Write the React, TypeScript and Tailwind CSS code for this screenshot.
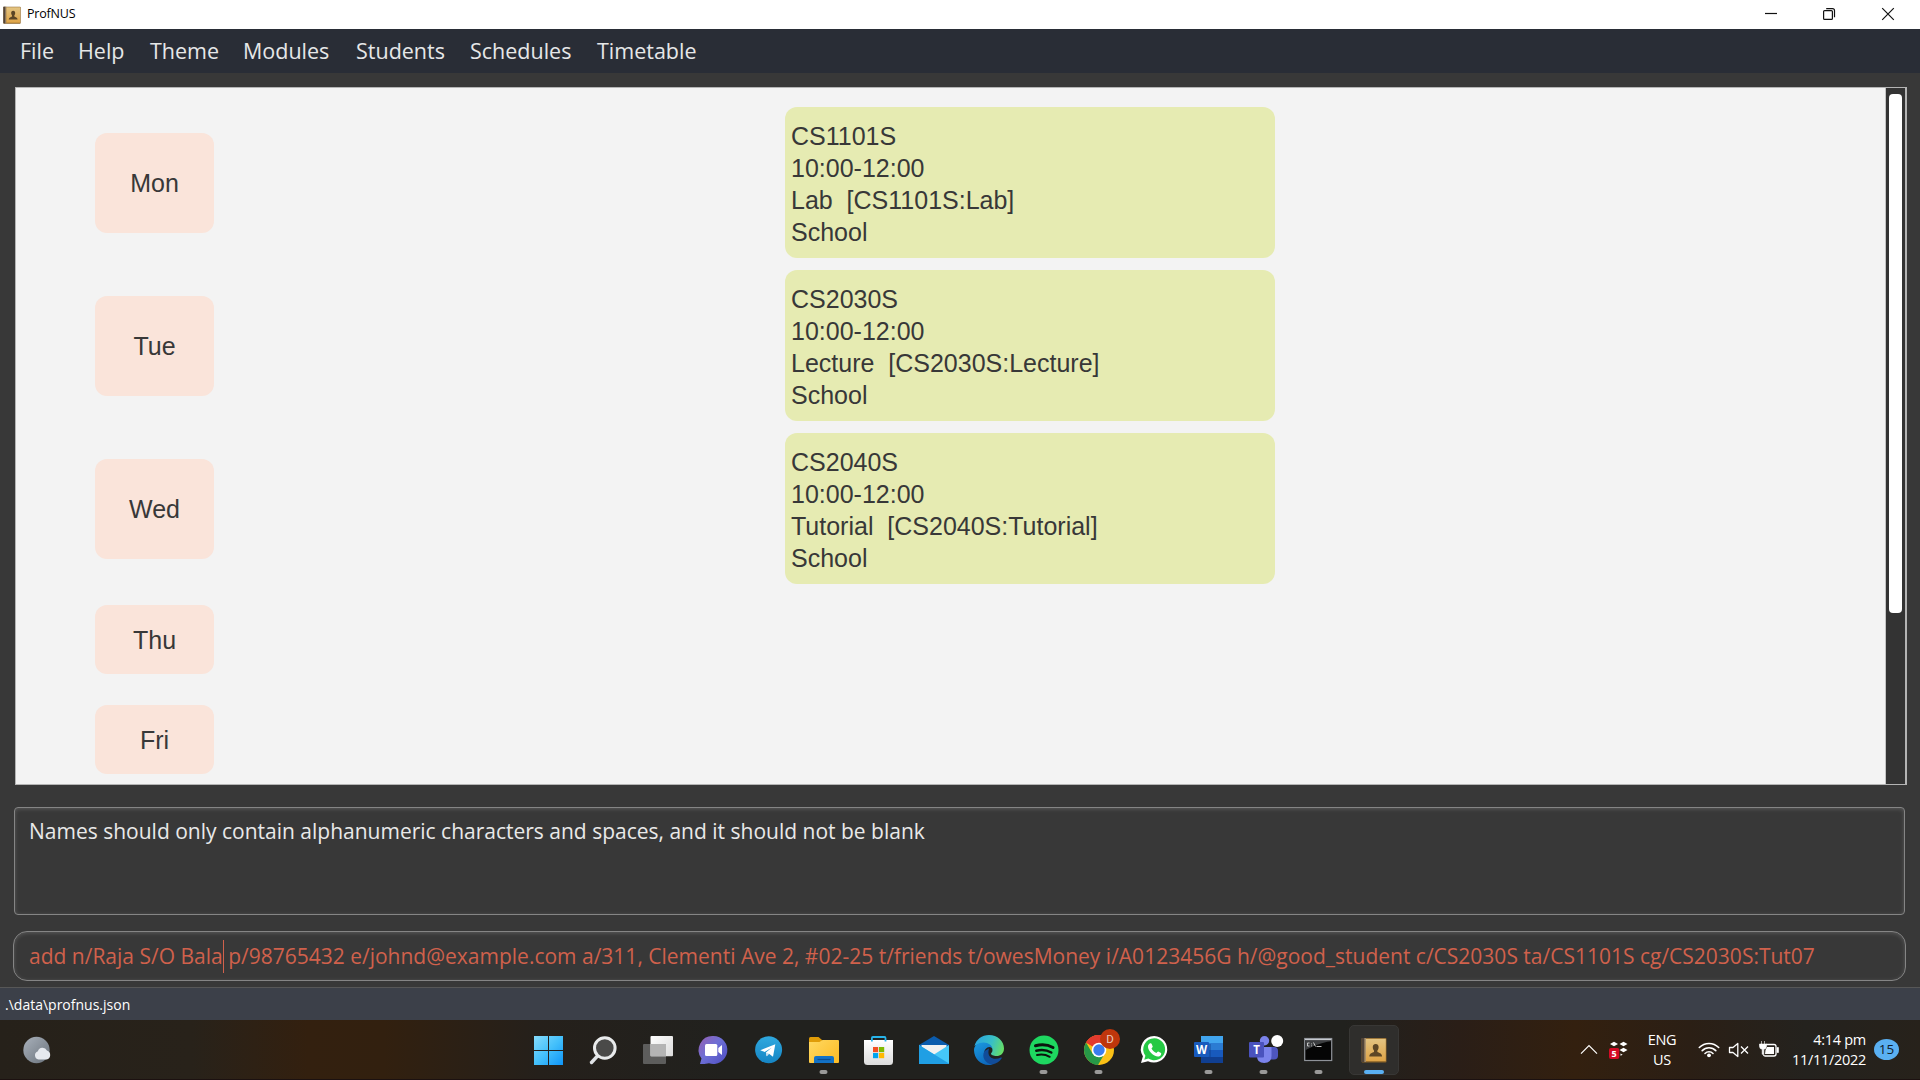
import React from "react";

const MENU: { label: string; cls: string }[] = [
  { label: "File", cls: "w-[58px]" },
  { label: "Help", cls: "w-[72px]" },
  { label: "Theme", cls: "w-[93px]" },
  { label: "Modules", cls: "w-[113px]" },
  { label: "Students", cls: "w-[114px]" },
  { label: "Schedules", cls: "w-[127px]" },
  { label: "Timetable", cls: "w-[110px]" },
];

const LESSONS = [
  { day: "Mon", module: "CS1101S", time: "10:00-12:00", kind: "Lab", place: "School" },
  { day: "Tue", module: "CS2030S", time: "10:00-12:00", kind: "Lecture", place: "School" },
  { day: "Wed", module: "CS2040S", time: "10:00-12:00", kind: "Tutorial", place: "School" },
];

function DayTag({ day, cls }: { day: string; cls: string }) {
  return (
    <div
      className={`flex w-[119px] shrink-0 items-center justify-center rounded-[12px] bg-[#fae4da] pt-[2px] text-[25px] leading-none text-[#383838] ${cls}`}
    >
      {day}
    </div>
  );
}

function BookIcon({ size }: { size: number }) {
  return (
    <svg width={size} height={size} viewBox="0 0 26 26">
      <defs>
        <linearGradient id="book" x1="0" y1="0" x2="0" y2="1">
          <stop offset="0" stopColor="#e3c482" />
          <stop offset="1" stopColor="#dfa447" />
        </linearGradient>
      </defs>
      <rect x="0.5" y="1" width="25" height="24.5" rx="1" fill="#8c6428" />
      <rect x="0.5" y="1" width="3" height="24" fill="#514439" />
      <rect x="3.5" y="1" width="1.3" height="24" fill="#a39380" />
      <rect x="4.8" y="1.8" width="20" height="22.4" fill="url(#book)" />
      <path
        d="M14.7 7c2.1 0 3.1 1.400 2.900 3.600-.1 1.300-.6 2.300-1.200 2.900v1.500c1.600.8 4.500 1.200 4.700 4.400H8.300c.2-3.200 3.100-3.600 4.700-4.400v-1.500c-.6-.6-1.100-1.600-1.200-2.900C11.600 8.400 12.600 7 14.700 7z"
        fill="#5c4626"
      />
    </svg>
  );
}

const APPS: { name: string; running?: boolean; art: React.ReactNode }[] = [
  {
    name: "Start",
    art: (
      <>
        <linearGradient id="win" gradientUnits="userSpaceOnUse" x1="534" y1="1036" x2="563" y2="1065">
          <stop offset="0" stopColor="#86dcfd" />
          <stop offset="0.5" stopColor="#44c0fb" />
          <stop offset="1" stopColor="#0f95f8" />
        </linearGradient>
        <path d="M534 1036h14v14h-14zM549 1036h14v14h-14zM534 1051h14v14h-14zM549 1051h14v14h-14z" fill="url(#win)" />
      </>
    ),
  },
  {
    name: "Search",
    art: (
      <>
        <path d="M597 1056.500l-5.500 6" stroke="#dfe2e5" strokeWidth="3.400" strokeLinecap="round" />
        <circle cx="604.800" cy="1048" r="10.300" fill="#4a4a49" stroke="#e9ebec" strokeWidth="3" />
      </>
    ),
  },
  {
    name: "Task view",
    art: (
      <>
        <linearGradient id="tv" gradientUnits="userSpaceOnUse" x1="650" y1="1036" x2="673" y2="1056">
          <stop offset="0" stopColor="#ffffff" />
          <stop offset="1" stopColor="#dcdcdc" />
        </linearGradient>
        <rect x="643" y="1044" width="23" height="20" rx="1" fill="#5d5d5c" />
        <rect x="650.500" y="1036" width="22.500" height="20.300" rx="1" fill="url(#tv)" />
        <path d="M650.500 1044H666v12.300h-15.500z" fill="#b4b4b4" />
      </>
    ),
  },
  {
    name: "Chat",
    art: (
      <>
        <linearGradient id="chat" gradientUnits="userSpaceOnUse" x1="702" y1="1038" x2="726" y2="1060">
          <stop offset="0" stopColor="#8e62b8" />
          <stop offset="0.45" stopColor="#6d6fd6" />
          <stop offset="1" stopColor="#5352c4" />
        </linearGradient>
        <path d="M713.500 1036a14 14 0 1 1-4.500 27.300c-2.500.8-6 .9-9 .7l1.500-5.500A14 14 0 0 1 713.500 1036z" fill="url(#chat)" />
        <rect x="705" y="1044" width="12.300" height="12" rx="1.500" fill="#fff" />
        <path d="M718.300 1048l3.700-3v10l-3.700-3z" fill="#fff" />
      </>
    ),
  },
  {
    name: "Telegram",
    art: (
      <>
        <linearGradient id="tg" x1="0" y1="0" x2="0" y2="1">
          <stop offset="0" stopColor="#2fa9df" />
          <stop offset="1" stopColor="#1685c4" />
        </linearGradient>
        <circle cx="768.600" cy="1049.700" r="13.500" fill="url(#tg)" />
        <path d="M760.300 1050.200l15-6-2.300 12.600-4-3-2.300 2.400-.8-3.700 5.700-4.800-7 4.200z" fill="#fff" />
        <path d="M765.900 1052.500l.8 3.700 2.300-2.400z" fill="#c5dcec" />
      </>
    ),
  },
  {
    name: "File Explorer",
    running: true,
    art: (
      <>
        <linearGradient id="fe" gradientUnits="userSpaceOnUse" x1="812" y1="1040" x2="836" y2="1063">
          <stop offset="0" stopColor="#ffd75e" />
          <stop offset="1" stopColor="#fdbd28" />
        </linearGradient>
        <path d="M809 1038.500q0-1.500 1.500-1.500h8l3.500 3v4h-13z" fill="#e09c08" />
        <path d="M809 1042h10.500l3-2H838q1 0 1 1v21q0 1-1 1H810q-1 0-1-1z" fill="url(#fe)" />
        <path d="M814 1063v-5q0-2 2-2h16q2 0 2 2v5z" fill="#1372c6" />
        <path d="M817.500 1059.500h13" stroke="#0a4d91" strokeWidth="1.200" />
      </>
    ),
  },
  {
    name: "Store",
    art: (
      <>
        <linearGradient id="st" x1="0" y1="0" x2="0" y2="1">
          <stop offset="0" stopColor="#ffffff" />
          <stop offset="1" stopColor="#dcdcdc" />
        </linearGradient>
        <path d="M864 1040h29v21.500q0 3.500-3.500 3.500h-22q-3.500 0-3.500-3.500z" fill="url(#st)" />
        <path d="M871.900 1041.500v-3.500q0-1 1-1h11.600q1 0 1 1v3.500" fill="none" stroke="#27b4ea" strokeWidth="1.800" />
        <rect x="873" y="1047" width="5.200" height="5.200" fill="#f25022" />
        <rect x="879" y="1047" width="5.200" height="5.200" fill="#7fba00" />
        <rect x="873" y="1053" width="5.200" height="5.200" fill="#00a4ef" />
        <rect x="879" y="1053" width="5.200" height="5.200" fill="#ffb900" />
      </>
    ),
  },
  {
    name: "Mail",
    art: (
      <>
        <path d="M919 1045l15-9 15 9v5h-30z" fill="#0b5cad" />
        <path d="M921.500 1045h25v10h-25z" fill="#f1f1f1" />
        <path d="M919 1045l15 9 15 19-30-9z" fill="none" />
        <path d="M919 1045l15 9.500 15-9.500v19h-30z" fill="#45c7f8" />
        <path d="M919 1045l30 18.500v.5h-30z" fill="#209fe4" />
      </>
    ),
  },
  {
    name: "Edge",
    art: (
      <>
        <linearGradient id="ed1" gradientUnits="userSpaceOnUse" x1="976" y1="1042" x2="1004" y2="1052">
          <stop offset="0" stopColor="#2ca7dd" />
          <stop offset="0.5" stopColor="#38bfc6" />
          <stop offset="1" stopColor="#6ce25a" />
        </linearGradient>
        <linearGradient id="ed2" gradientUnits="userSpaceOnUse" x1="976" y1="1042" x2="990" y2="1065">
          <stop offset="0" stopColor="#1b9ae0" />
          <stop offset="1" stopColor="#0c63b8" />
        </linearGradient>
        <path d="M974.500 1046c1.500-6.500 7.500-11 14.500-11 8.500 0 15 6 15 13.500 0 5-3.500 7.500-7.500 7.500-3 0-5.500-1.300-5.500-2.300 0-.8 1.500-1.300 1.500-3.700 0-3.500-4-6.500-9-6.500-3.500 0-6.500 1-9 2.500z" fill="url(#ed1)" />
        <path d="M974 1050c0-4.500 4-7.500 9.500-7.500 5 0 9 3 9 7 0-1.500-1.500-2.500-3-2.500-3 0-5.500 3-5.500 7 0 5 4 8.500 8.500 10.500-9.500 2.500-18.500-4.500-18.500-14.500z" fill="url(#ed2)" />
        <path d="M984.500 1051c-3.500 6 1 13 8 13.500 4-.8 7.300-3 9.200-6.200.4-.7-.2-1-.8-.7-6.500 3-13.400.4-12.400-6.600l.5-2.500z" fill="#114c99" />
      </>
    ),
  },
  {
    name: "Spotify",
    running: true,
    art: (
      <>
        <circle cx="1044" cy="1050" r="14.500" fill="#1ed760" />
        <g fill="none" stroke="#0b130d" strokeLinecap="round">
          <path d="M1035.500 1045.800c6-1.600 12.500-1 17.500 1.700" strokeWidth="3" />
          <path d="M1036.300 1050.700c5-1.300 10.500-.8 15 1.800" strokeWidth="2.500" />
          <path d="M1037 1055c4.500-1 9-.4 12.700 1.800" strokeWidth="2" />
        </g>
      </>
    ),
  },
  {
    name: "Chrome",
    running: true,
    art: (
      <>
        <circle cx="1099" cy="1050" r="15" fill="#fbc116" />
        <path d="M1099 1050L1086 1042.500a15 15 0 0 1 26 0z" fill="#e33b2e" />
        <path d="M1099 1050v-7.500h13l-13-7.500a15 15 0 0 0-13 7.500z" fill="#e33b2e" />
        <path d="M1086 1042.500a15 15 0 0 0 12 22.500l7-12-6-3-6.500 3.500z" fill="#279847" />
        <circle cx="1099" cy="1050" r="7.300" fill="#fff" />
        <circle cx="1099" cy="1050" r="5.700" fill="#3b7ded" />
        <circle cx="1110" cy="1039" r="10" fill="#bf360c" />
        <text x="1110" y="1043" textAnchor="middle" fontSize="11.500" fill="#e9c9be" fontFamily="Roboto, sans-serif">D</text>
      </>
    ),
  },
  {
    name: "WhatsApp",
    art: (
      <>
        <path d="M1154.300 1036a13.300 13.300 0 1 1-6.300 25.200l-7 1.800 1.900-6.700A13.300 13.300 0 0 1 1154.300 1036z" fill="#fff" />
        <path d="M1154.300 1038.300a11 11 0 1 1-6 20.300l-4 1.100 1.100-3.900a11 11 0 0 1 8.900-17.500z" fill="#25c944" />
        <path d="M1150 1043.300c.6-.3 1.300-.2 1.600.5l1.100 2.600c.2.600-.9 1.500-1.200 2 1.200 2.200 2.800 3.700 5 4.600.5-.5 1.200-1.700 1.800-1.500l2.700 1.400c.6.400-.1 2.500-1.100 3.100-2.600 1.500-6.300-.7-8.500-2.800-1.800-1.800-3.700-4.500-3.400-6.900.1-1.300 1.200-2.600 2-3z" fill="#fff" />
      </>
    ),
  },
  {
    name: "Word",
    running: true,
    art: (
      <>
        <path d="M1201 1036h22v7h-22z" fill="#41a5ee" />
        <path d="M1201 1043h22v7h-22z" fill="#2b7cd3" />
        <path d="M1201 1050h22v7h-22z" fill="#185abd" />
        <path d="M1201 1057h22v6h-22z" fill="#103f91" />
        <path d="M1201 1044h10v13h-10z" fill="#0d3a7d" opacity="0.35" />
        <rect x="1194" y="1042" width="15" height="15" rx="1" fill="#185abd" />
        <text x="1201.500" y="1053.700" textAnchor="middle" fontSize="11.500" fontWeight="700" fill="#fff" fontFamily="Open Sans, sans-serif">W</text>
      </>
    ),
  },
  {
    name: "Teams",
    running: true,
    art: (
      <>
        <rect x="1268" y="1047" width="10" height="12.500" rx="4" fill="#4e56bf" />
        <path d="M1257 1047h14.500v9q0 7-7.300 7t-7.200-7z" fill="#7b83eb" />
        <circle cx="1264.500" cy="1040.700" r="4.700" fill="#7b83eb" />
        <rect x="1249" y="1042" width="15" height="15.500" rx="1" fill="#4a52bd" />
        <text x="1256.500" y="1053.800" textAnchor="middle" fontSize="11.500" fontWeight="700" fill="#fff" fontFamily="Open Sans, sans-serif">T</text>
        <circle cx="1277.200" cy="1041" r="6" fill="#fff" />
      </>
    ),
  },
  {
    name: "Command Prompt",
    running: true,
    art: (
      <>
        <rect x="1304.700" y="1038.500" width="27" height="22" fill="#050505" stroke="#8f9399" strokeWidth="1.200" />
        <path d="M1305.300 1039.300h25.800v2c-10 1-20 6-25.800 9z" fill="#3c3e40" />
        <path d="M1305 1039.500h26.400" stroke="#c6cacf" strokeWidth="1.200" />
        <path d="M1307.500 1043h2M1307.500 1046h2M1307.500 1043v3M1311.500 1043.500v.8M1311.500 1045.500v.8M1313.500 1042.500l2 4M1316.500 1046.500h5" stroke="#d4d4d4" strokeWidth="0.900" />
      </>
    ),
  },
];

function SystemTray() {
  return (
    <div className="flex h-[60px] w-[350px] items-center text-white">
      <svg width="67" height="60" viewBox="1570 1020 67 60" className="mr-[1px]">
        <path d="M1581 1053.700l8-8 8 8" fill="none" stroke="#fff" strokeWidth="1.200" />
        <path d="M1610 1044l4-2.300 4 2.300-4 2.300zM1619.500 1044l4-2.300 4 2.300-4 2.300zM1619.500 1050l4-2.300 4 2.300-4 2.300zM1620.500 1053.500l2.200 1.300-2.200 1z" fill="#fff" />
        <rect x="1609" y="1048" width="10.300" height="11" rx="2" fill="#d40a24" />
        <text x="1614.200" y="1056.700" textAnchor="middle" fontSize="9" fontWeight="700" fill="#fff" fontFamily="Open Sans, sans-serif">5</text>
      </svg>
      <div className="w-[48px] pt-[1px] text-center text-[14.500px] leading-[20px] tracking-[-0.300px]">
        <div>ENG</div>
        <div>US</div>
      </div>
      <svg width="104" height="60" viewBox="1686 1020 104 60" fill="none" stroke="#fff" strokeWidth="1.300">
        <path d="M1699.300 1047.500a13.700 13.700 0 0 1 19.400 0M1702.200 1050.600a9.500 9.500 0 0 1 13.600 0M1705 1053.500a5.600 5.600 0 0 1 8 0" strokeWidth="1.600" strokeLinecap="round" />
        <circle cx="1709" cy="1055.300" r="1.900" fill="#fff" stroke="none" />
        <path d="M1729.500 1047.500h3.500l4.800-4v13l-4.800-4h-3.500z" strokeLinejoin="round" />
        <path d="M1741 1046.500l7 7M1748 1046.500l-7 7" />
        <path d="M1766 1044.500h8q2 0 2 2v7.500q0 2-2 2h-9q-1.500 0-1.500-1.500" />
        <path d="M1767 1047h7v7h-9l.5-4z" fill="#fff" stroke="none" />
        <path d="M1777 1047.500h1.500v5H1777z" fill="#fff" strokeWidth="0.600" />
        <path d="M1761.500 1041v3M1764.500 1041v3M1759.500 1044h7v2.500a3 3 0 0 1-2.700 2.800v5h-1.600v-5a3 3 0 0 1-2.700-2.800z" fill="#fff" strokeWidth="0.600" />
      </svg>
      <div className="w-[76px] text-right text-[14.500px] leading-[20px] tracking-[-0.300px] whitespace-nowrap">
        <div>4:14 pm</div>
        <div>11/11/2022</div>
      </div>
      <div className="ml-[8px] flex h-[21px] w-[25px] items-center justify-center rounded-[50%] bg-[#5ab0f2] text-[13.500px] leading-none text-[#10202c]">
        15
      </div>
    </div>
  );
}

export default function App() {
  return (
    <div className="flex h-[1080px] w-[1920px] flex-col overflow-hidden bg-[#383838] font-['Open_Sans',sans-serif]">
      <header className="flex h-[29px] shrink-0 items-center justify-between bg-white">
        <div className="flex items-center pl-[3px] text-[12.500px] text-black">
          <BookIcon size={18} />
          <span className="ml-[6px] tracking-[-0.200px]">ProfNUS</span>
        </div>
        <svg width="180" height="29" viewBox="1740 0 180 29" fill="none" stroke="#111" strokeWidth="1.200">
          <path d="M1765 13.500h12" />
          <rect x="1823.600" y="10.600" width="8.800" height="8.800" rx="1" />
          <path d="M1826.200 8.600h6.300q2 0 2 2v6.600" />
          <path d="M1882.200 8.200l11.600 11.600M1893.800 8.200l-11.600 11.600" />
        </svg>
      </header>

      <nav className="flex h-[44px] shrink-0 items-center bg-[#292d36] pl-[20px] text-[21.500px] text-[#e6e7e8]">
        {MENU.map((m) => (
          <span key={m.label} className={`shrink-0 whitespace-nowrap ${m.cls}`}>
            {m.label}
          </span>
        ))}
      </nav>

      <main className="mt-[14px] ml-[15px] flex h-[698px] w-[1892px] shrink-0 border border-r-2 border-[#b4b4b4]">
        <div className="flex h-full w-[1870px] shrink-0 flex-col overflow-hidden border-r border-[#c4c4c4] bg-[#f3f3f3] pt-[19px] pl-[79px] font-['Liberation_Sans',sans-serif]">
          {LESSONS.map((l) => (
            <div key={l.day} className="mb-[12px] flex h-[151px] shrink-0 items-center">
              <DayTag day={l.day} cls="h-[100px]" />
              <div className="ml-[571px] h-[151px] w-[490px] rounded-[12px] bg-[#e6ebb2] pt-[13px] pl-[6px] text-[25px] leading-[32px] whitespace-pre text-[#383838]">
                <div>{l.module}</div>
                <div>{l.time}</div>
                <div>{`${l.kind}  [${l.module}:${l.kind}]`}</div>
                <div>{l.place}</div>
              </div>
            </div>
          ))}
          <DayTag day="Thu" cls="mt-[9px] h-[69px]" />
          <DayTag day="Fri" cls="mt-[31px] h-[69px]" />
        </div>
        <div className="flex flex-1 justify-center bg-[#333333] pt-[6px]">
          <div className="h-[519px] w-[13px] rounded-[4px] bg-white" />
        </div>
      </main>

      <section className="mt-[22px] ml-[14px] h-[108px] w-[1891px] shrink-0 rounded-[4px] border border-[#858585] pt-[7px] pl-[14px] text-[21px] leading-[32px] text-[#e9e9e9] shadow-[inset_0_1px_4px_rgba(255,255,255,0.18)]">
        Names should only contain alphanumeric characters and spaces, and it should not be blank
      </section>

      <section className="mt-[16px] ml-[13px] flex h-[50px] w-[1893px] shrink-0 items-center rounded-[14px] border-[1.500px] border-[#858585] pl-[15px] text-[21px] leading-[32px] whitespace-pre text-[#d0614c] shadow-[inset_0_1px_4px_rgba(255,255,255,0.18)]">
        <span>add n/Raja S/O Bala</span>
        <span className="-mr-px h-[33px] w-px bg-[#d0614c]" />
        <span>
          {" p/98765432 e/johnd@example.com a/311, Clementi Ave 2, #02-25 t/friends t/owesMoney i/A0123456G h/@good_student c/CS2030S ta/CS1101S cg/CS2030S:Tut07"}
        </span>
      </section>

      <footer className="mt-[6px] flex h-[33px] shrink-0 items-center border-t border-[#575757] bg-[#3c4049] pl-[5px] text-[14px] text-white">
        .\data\profnus.json
      </footer>

      <div className="flex h-[60px] shrink-0 items-center border-b border-[#1c1110] bg-[linear-gradient(90deg,#26211a_0%,#28221a_10%,#33200f_16%,#32200f_20%,#25201b_28%,#21211e_38%,#21211e_70%,#2a1e17_76%,#33200f_82%,#2b1f15_88%,#24221e_94%,#27221b_100%)]">
        <svg width="521" height="60" viewBox="0 1020 521 60">
          <linearGradient id="moon" x1="0" y1="0" x2="1" y2="1">
            <stop offset="0" stopColor="#a9b1bb" />
            <stop offset="1" stopColor="#6a727b" />
          </linearGradient>
          <circle cx="36.500" cy="1050" r="13.200" fill="url(#moon)" />
          <path d="M38.500 1059.500a4.300 4.300 0 0 1-.6-8.300 4.800 4.800 0 0 1 9-.6 4.600 4.600 0 0 1-.3 8.900z" fill="#e6e9ee" />
        </svg>
        {APPS.map((app, i) => (
          <svg key={app.name} width="55" height="60" viewBox={`${521 + 55 * i} 1020 55 60`} aria-label={app.name}>
            {app.art}
            {app.running && <rect x={544.5 + 55 * i} y="1070" width="8" height="4" rx="2" fill="#9a9a99" />}
          </svg>
        ))}
        <div className="flex w-[55px] justify-center">
          <div className="relative flex h-[50px] w-[50px] items-center justify-center rounded-[5px] border border-[#383735] bg-[#2f2e2c]">
            <BookIcon size={26} />
            <span className="absolute bottom-0 left-[14px] h-[4px] w-[20px] rounded-full bg-[#5ab0f2]" />
          </div>
        </div>
        <div className="w-[169px]" />
        <SystemTray />
      </div>
    </div>
  );
}
